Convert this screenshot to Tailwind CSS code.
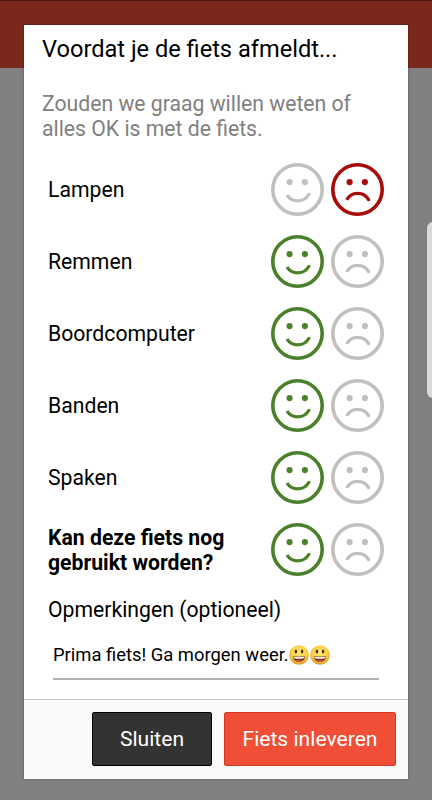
<!DOCTYPE html>
<html lang="nl">
<head>
  <meta charset="UTF-8">
  <meta name="viewport" content="width=device-width, initial-scale=1.0">
  <title>Fiets afmelden</title>
  <script src="https://cdn.jsdelivr.net/npm/@tailwindcss/browser@4"></script>
</head>
<body class="font-[Roboto,sans-serif] bg-[#808080] text-black">
  <!-- Icons -->
  <svg class="absolute size-0">
    <radialGradient id="face" cx="0.5" cy="0.4" r="0.6">
      <stop offset="0" stop-color="#ffe873"/>
      <stop offset="0.65" stop-color="#fcd046"/>
      <stop offset="1" stop-color="#dc9326"/>
    </radialGradient>
    <symbol id="happy" viewBox="0 0 53 53">
      <circle cx="26.5" cy="26.5" r="24.7" fill="none" stroke="currentColor" stroke-width="3.6"/>
      <circle cx="18.6" cy="19.1" r="3.1" fill="currentColor"/>
      <circle cx="33.9" cy="19.1" r="3.1" fill="currentColor"/>
      <path d="M16 32C20.5 39.6 33.5 40.2 37.9 31.1" fill="none" stroke="currentColor" stroke-width="3.2"/>
      <circle cx="37.9" cy="31.3" r="1.6" fill="currentColor"/>
    </symbol>
    <symbol id="sad" viewBox="0 0 53 53">
      <circle cx="26.5" cy="26.5" r="24.7" fill="none" stroke="currentColor" stroke-width="3.6"/>
      <circle cx="18.6" cy="19.1" r="3.1" fill="currentColor"/>
      <circle cx="33.9" cy="19.1" r="3.1" fill="currentColor"/>
      <path d="M15.8 36.9C20 28.2 33 28 37.7 36.9" fill="none" stroke="currentColor" stroke-width="3.2"/>
      <circle cx="37.6" cy="36.7" r="1.6" fill="currentColor"/>
    </symbol>
    <symbol id="grin" viewBox="0 0 20 20">
      <circle cx="10" cy="10" r="9.8" fill="url(#face)"/>
      <ellipse cx="6.9" cy="6.6" rx="1.2" ry="2" fill="#49320c"/>
      <ellipse cx="13.1" cy="6.6" rx="1.2" ry="2" fill="#49320c"/>
      <path d="M3.8 11Q10 12.6 16.2 11Q15.6 16.8 10 16.8Q4.4 16.8 3.8 11Z" fill="#6b2a16"/>
      <path d="M4.3 11.5Q10 13 15.7 11.5L15.2 13.3Q10 14.3 4.8 13.3Z" fill="#fff"/>
      <path d="M6.3 15.6Q10 13.9 13.7 15.6Q10 17.8 6.3 15.6Z" fill="#df4a3f"/>
    </symbol>
  </svg>

  <div class="relative h-[800px] overflow-hidden">
    <header class="h-[68px] bg-[#7a281c] border-t border-[#4a1a14]"></header>
    <div class="absolute top-[222px] -right-2 w-[13px] h-[176px] rounded-md bg-[#d9d9d9]"></div>

    <div class="absolute top-[25px] left-6 w-96 h-[753.5px] bg-white flex flex-col shadow-[0_0_2px_rgba(0,0,0,0.4)]">
      <main class="h-[675px] border-b border-[#c8c8c8]">
        <h1 class="pt-[9px] pl-[18px] text-[23.6px] leading-[30px] whitespace-nowrap">Voordat je de fiets afmeldt...</h1>
        <p class="mt-[27px] pl-[18px] text-[21.2px] leading-[25px] text-[#808080] whitespace-nowrap">Zouden we graag willen weten of<br>alles OK is met de fiets.</p>

        <div class="mt-[12px] pl-6 pr-[24px] text-[21.2px] leading-[25px]">
          <div class="h-[72px] flex items-center justify-between">
            <span class="pt-px">Lampen</span>
            <div class="flex gap-[7px]">
              <svg class="size-[53px] text-[#c0c0c0]"><use href="#happy"/></svg>
              <svg class="size-[53px] text-[#a90a0a]"><use href="#sad"/></svg>
            </div>
          </div>
          <div class="h-[72px] flex items-center justify-between">
            <span class="pt-px">Remmen</span>
            <div class="flex gap-[7px]">
              <svg class="size-[53px] text-[#4b812b]"><use href="#happy"/></svg>
              <svg class="size-[53px] text-[#c0c0c0]"><use href="#sad"/></svg>
            </div>
          </div>
          <div class="h-[72px] flex items-center justify-between">
            <span class="pt-px">Boordcomputer</span>
            <div class="flex gap-[7px]">
              <svg class="size-[53px] text-[#4b812b]"><use href="#happy"/></svg>
              <svg class="size-[53px] text-[#c0c0c0]"><use href="#sad"/></svg>
            </div>
          </div>
          <div class="h-[72px] flex items-center justify-between">
            <span class="pt-px">Banden</span>
            <div class="flex gap-[7px]">
              <svg class="size-[53px] text-[#4b812b]"><use href="#happy"/></svg>
              <svg class="size-[53px] text-[#c0c0c0]"><use href="#sad"/></svg>
            </div>
          </div>
          <div class="h-[72px] flex items-center justify-between">
            <span class="pt-px">Spaken</span>
            <div class="flex gap-[7px]">
              <svg class="size-[53px] text-[#4b812b]"><use href="#happy"/></svg>
              <svg class="size-[53px] text-[#c0c0c0]"><use href="#sad"/></svg>
            </div>
          </div>
          <div class="h-[72px] flex items-center justify-between">
            <span class="pt-0.5 font-bold whitespace-nowrap">Kan deze fiets nog<br>gebruikt worden?</span>
            <div class="flex gap-[7px]">
              <svg class="size-[53px] text-[#4b812b]"><use href="#happy"/></svg>
              <svg class="size-[53px] text-[#c0c0c0]"><use href="#sad"/></svg>
            </div>
          </div>
          <p class="mt-3">Opmerkingen (optioneel)</p>
        </div>

        <div class="mt-[18px] ml-[29px] w-[326px] h-[40px] border-b-2 border-[#b0b0b0] flex items-start text-[18.4px] leading-[30px] whitespace-nowrap">
          <span>Prima fiets! Ga morgen weer.</span>
          <svg class="size-5 mt-[5px] mr-[1.5px]"><use href="#grin"/></svg>
          <svg class="size-5 mt-[5px]"><use href="#grin"/></svg>
        </div>
      </main>

      <footer class="flex-1 bg-[#fafafa] flex justify-end gap-3 pt-3 pr-3 text-[21.1px]">
        <button class="w-[120px] h-[54px] rounded-[2px] bg-[#333333] border border-black text-white">Sluiten</button>
        <button class="w-[172px] h-[54px] rounded-[2px] bg-[#f04e37] border border-[#d03a25] text-white whitespace-nowrap">Fiets inleveren</button>
      </footer>
    </div>
  </div>
</body>
</html>
